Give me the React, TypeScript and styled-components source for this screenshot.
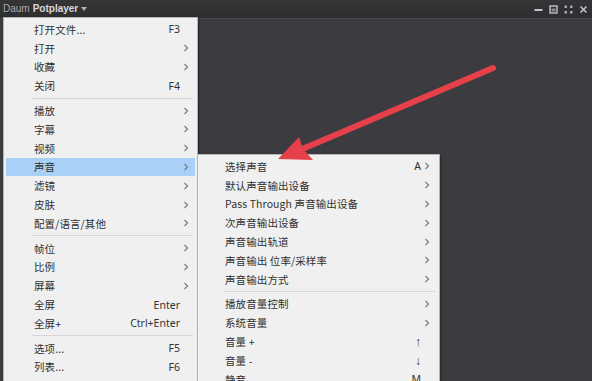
import React, { ReactElement } from "react";
import styled, { createGlobalStyle } from "styled-components";

const GlobalStyle = createGlobalStyle`
  html, body {
    margin: 0;
    padding: 0;
    background: #3c3b40;
  }
  body {
    font-family: "Noto Sans CJK SC", "Noto Sans", sans-serif;
  }
`;

const Window = styled.div`
  position: relative;
  width: 592px;
  height: 381px;
  overflow: hidden;
  background: #3c3b40;
  display: flex;
  flex-direction: column;
`;

const TitleBar = styled.div`
  height: 18px;
  flex: none;
  display: flex;
  align-items: center;
  padding: 0 4px 0 3px;
  background: linear-gradient(#353538, #2e2e31);
  border-bottom: 1px solid #4a4a4f;
`;

const Brand = styled.div`
  display: flex;
  align-items: center;
  gap: 3px;
  font-family: "Liberation Sans", "Noto Sans", sans-serif;
  font-size: 10px;
  line-height: 1;
`;

const Daum = styled.span`
  color: #a8a8ac;
`;

const Pot = styled.span`
  color: #d8d8dc;
  font-weight: bold;
`;

const Caret = styled.span`
  width: 0;
  height: 0;
  border-left: 3.5px solid transparent;
  border-right: 3.5px solid transparent;
  border-top: 4px solid #b0b0b4;
`;

const Controls = styled.div`
  margin-left: auto;
  display: flex;
  align-items: center;
  gap: 6px;
`;

const Stage = styled.div`
  position: relative;
  flex: 1;
`;

const Menu = styled.div<{ $left: number; $top: number; $width: number }>`
  position: absolute;
  left: ${(p) => p.$left}px;
  top: ${(p) => p.$top}px;
  width: ${(p) => p.$width}px;
  box-sizing: border-box;
  padding: 2px;
  background: #f0f0f0;
  border: 1px solid #b4b4b8;
  box-shadow: 1px 1px 2px rgba(0, 0, 0, 0.35);
`;

const Row = styled.div<{ $active?: boolean; $pl: number; $pr: number }>`
  height: 18.8px;
  display: grid;
  grid-template-columns: 1fr auto 10px;
  column-gap: 1px;
  align-items: center;
  padding: 0 ${(p) => p.$pr}px 0 ${(p) => p.$pl}px;
  background: ${(p) => (p.$active ? "#a9d1f7" : "transparent")};
  font-size: 10.5px;
  color: #303030;
  white-space: nowrap;
`;

const Label = styled.span`
  letter-spacing: 0.1px;
`;

const Shortcut = styled.span<{ $big?: boolean }>`
  font-family: "Noto Sans", sans-serif;
  font-size: ${(p) => (p.$big ? "12px" : "10.5px")};
  text-align: right;
  color: #333;
`;

const Sep = styled.div<{ $ml: number }>`
  height: 1px;
  margin: 2.5px 2px 2.5px ${(p) => p.$ml}px;
  background: #d6d6d8;
`;

const Overlay = styled.svg`
  position: absolute;
  left: 0;
  top: 0;
  pointer-events: none;
`;

type Item = { label: string; key?: string; sub?: boolean; active?: boolean } | "sep";

const mainItems: Item[] = [
  { label: "打开文件...", key: "F3" },
  { label: "打开", sub: true },
  { label: "收藏", sub: true },
  { label: "关闭", key: "F4" },
  "sep",
  { label: "播放", sub: true },
  { label: "字幕", sub: true },
  { label: "视频", sub: true },
  { label: "声音", sub: true, active: true },
  { label: "滤镜", sub: true },
  { label: "皮肤", sub: true },
  { label: "配置/语言/其他", sub: true },
  "sep",
  { label: "帧位", sub: true },
  { label: "比例", sub: true },
  { label: "屏幕", sub: true },
  { label: "全屏", key: "Enter" },
  { label: "全屏+", key: "Ctrl+Enter" },
  "sep",
  { label: "选项...", key: "F5" },
  { label: "列表...", key: "F6" },
  { label: "属性...", key: "Ctrl+F1" },
];

const soundItems: Item[] = [
  { label: "选择声音", key: "A", sub: true },
  { label: "默认声音输出设备", sub: true },
  { label: "Pass Through 声音输出设备", sub: true },
  { label: "次声音输出设备", sub: true },
  { label: "声音输出轨道", sub: true },
  { label: "声音输出 位率/采样率", sub: true },
  { label: "声音输出方式", sub: true },
  "sep",
  { label: "播放音量控制", sub: true },
  { label: "系统音量", sub: true },
  { label: "音量 +", key: "↑" },
  { label: "音量 -", key: "↓" },
  { label: "静音", key: "M" },
];

const Chevron = () => (
  <svg width="10" height="8" viewBox="0 0 10 8">
    <path d="M3.5 1 L6.5 4 L3.5 7" fill="none" stroke="#7c7c80" strokeWidth="1.2" />
  </svg>
);

interface MenuProps {
  items: Item[];
  left: number;
  top: number;
  width: number;
  pl: number;
  pr: number;
}

function MenuList({ items, left, top, width, pl, pr }: MenuProps): ReactElement {
  return (
    <Menu $left={left} $top={top} $width={width}>
      {items.map((it, i) =>
        it === "sep" ? (
          <Sep key={i} $ml={pl - 2} />
        ) : (
          <Row key={i} $active={it.active} $pl={pl} $pr={pr}>
            <Label>{it.label}</Label>
            <Shortcut $big={it.key === "↑" || it.key === "↓"}>{it.key ?? ""}</Shortcut>
            {it.sub ? <Chevron /> : <span />}
          </Row>
        )
      )}
    </Menu>
  );
}

export default function App(): ReactElement {
  return (
    <>
      <GlobalStyle />
      <Window>
        <TitleBar>
          <Brand>
            <Daum>Daum</Daum>
            <Pot>Potplayer</Pot>
            <Caret />
          </Brand>
          <Controls>
            <svg width="9" height="9" viewBox="0 0 9 9">
              <rect x="0.5" y="4" width="8" height="2" fill="#c4c4c8" />
            </svg>
            <svg width="9" height="9" viewBox="0 0 9 9">
              <rect x="1" y="1" width="7" height="7" fill="none" stroke="#c4c4c8" strokeWidth="1.4" />
              <rect x="2.5" y="3.5" width="4" height="3" fill="#8a8a8e" />
            </svg>
            <svg width="9" height="9" viewBox="0 0 9 9">
              <rect x="0.5" y="0.5" width="2.5" height="2.5" fill="#a8a8ac" />
              <rect x="6" y="0.5" width="2.5" height="2.5" fill="#a8a8ac" />
              <rect x="0.5" y="6" width="2.5" height="2.5" fill="#a8a8ac" />
              <rect x="6" y="6" width="2.5" height="2.5" fill="#a8a8ac" />
            </svg>
            <svg width="9" height="9" viewBox="0 0 9 9">
              <path d="M1.5 1.5 L7.5 7.5 M7.5 1.5 L1.5 7.5" stroke="#c4c4c8" strokeWidth="1.6" />
            </svg>
          </Controls>
        </TitleBar>
        <Stage />
        <MenuList items={mainItems} left={3} top={17} width={195} pl={28} pr={4} />
        <MenuList items={soundItems} left={197} top={154} width={243} pl={25} pr={5} />
        <Overlay width="592" height="381" viewBox="0 0 592 381">
          <line
            x1="493"
            y1="68"
            x2="300"
            y2="150"
            stroke="#e6404a"
            strokeWidth="6"
            strokeLinecap="round"
          />
          <path d="M278 159 L299 137 L303 149 L313 160 Z" fill="#e6404a" />
        </Overlay>
      </Window>
    </>
  );
}
